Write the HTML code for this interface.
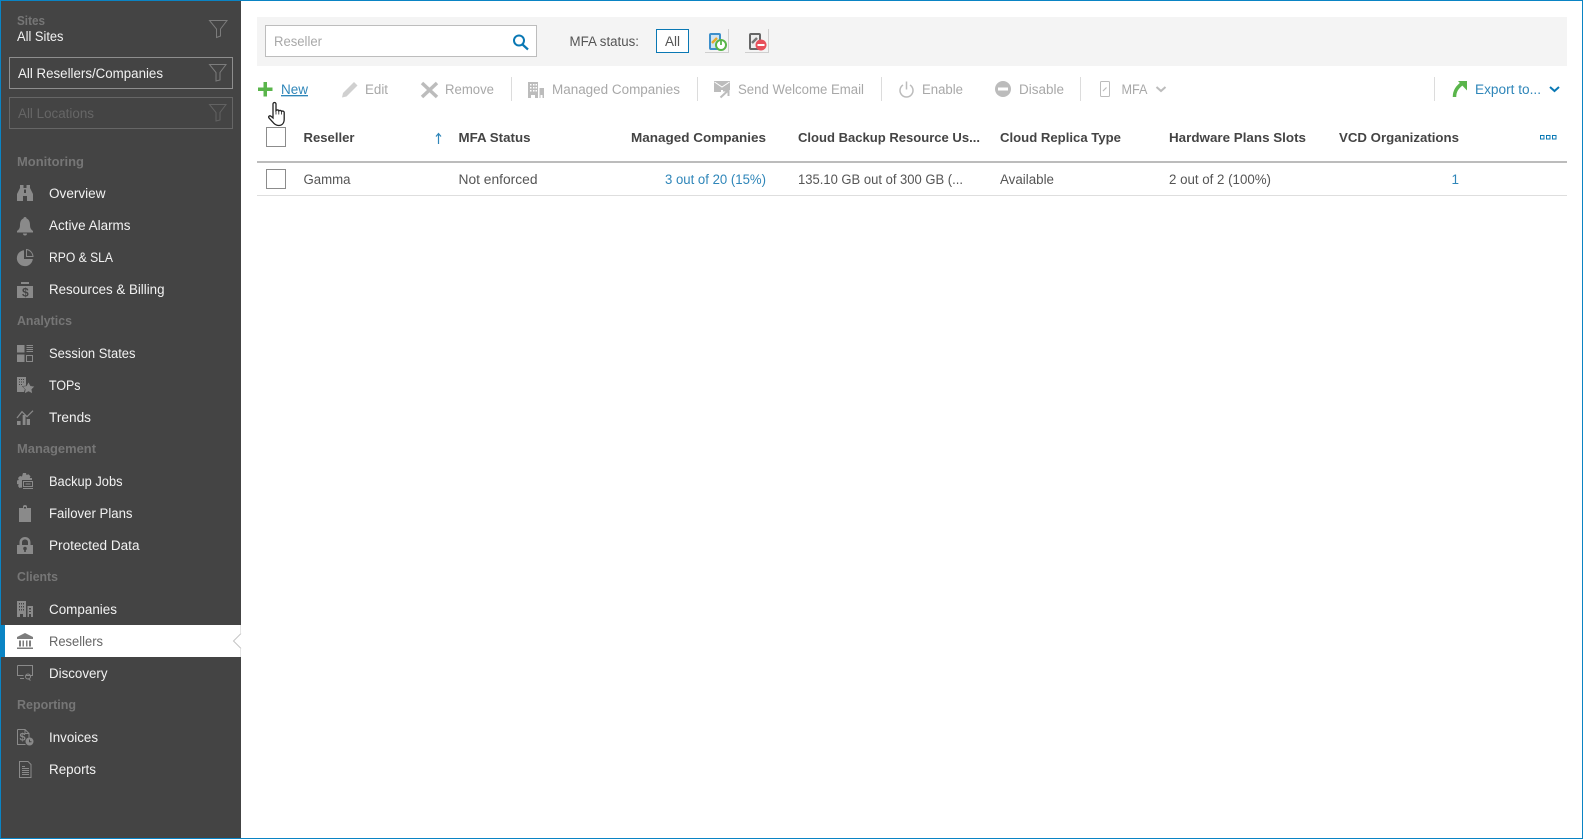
<!DOCTYPE html>
<html><head><meta charset="utf-8"><title>Resellers</title>
<style>
html,body{margin:0;padding:0;background:#fff;width:1583px;height:839px;overflow:hidden}
svg{display:block}
text{font-family:"Liberation Sans",sans-serif;font-size:13.5px;fill:#555}
.n{fill:#f2f2f2}
.h{fill:#767676;font-weight:bold;font-size:12.5px}
.d{fill:#a8a8a8}
.b{fill:#2f86b9}
.t{fill:#444;font-weight:bold;font-size:13px}
.i{fill:#8a8a8a}
.o{fill:none;stroke:#8a8a8a}
.g{fill:#bcbcbc}
.s{stroke:#dcdcdc;stroke-width:1}
</style></head><body>
<svg width="1583" height="839" viewBox="0 0 1583 839" xmlns="http://www.w3.org/2000/svg">
<rect x="0.500" y="0.500" width="1582" height="838" fill="#fff" stroke="#0a84c4"/>
<rect x="1" y="1" width="240" height="837" fill="#444"/>

<!-- sidebar top -->
<text class="h" x="17" y="25" textLength="28" lengthAdjust="spacingAndGlyphs">Sites</text>
<text class="n" x="17" y="41" textLength="46.500" lengthAdjust="spacingAndGlyphs">All Sites</text>
<path d="M209.500 20.500H227L220.500 29V36L216.500 37.500V29Z" fill="none" stroke="#7c7c7c"/>
<rect x="9.500" y="57.500" width="223" height="31" fill="none" stroke="#8e8e8e"/>
<text class="n" x="18" y="78" textLength="145" lengthAdjust="spacingAndGlyphs">All Resellers/Companies</text>
<path d="M209.500 64.500H226L220 72.500V80L216 81V72.500Z" fill="none" stroke="#7c7c7c"/>
<rect x="9.500" y="97.500" width="223" height="31" fill="none" stroke="#666"/>
<text x="18" y="118" textLength="76" lengthAdjust="spacingAndGlyphs" style="fill:#666">All Locations</text>
<path d="M209.500 104.500H226L220 112.500V120L216 121V112.500Z" fill="none" stroke="#626262"/>

<!-- sidebar labels -->
<text class="h" x="17" y="166" textLength="67" lengthAdjust="spacingAndGlyphs">Monitoring</text>
<text class="h" x="17" y="325" textLength="55" lengthAdjust="spacingAndGlyphs">Analytics</text>
<text class="h" x="17" y="453" textLength="79" lengthAdjust="spacingAndGlyphs">Management</text>
<text class="h" x="17" y="581" textLength="41" lengthAdjust="spacingAndGlyphs">Clients</text>
<text class="h" x="17" y="709" textLength="59" lengthAdjust="spacingAndGlyphs">Reporting</text>

<!-- sidebar items -->
<text class="n" x="49" y="198" textLength="56.500" lengthAdjust="spacingAndGlyphs">Overview</text>
<text class="n" x="49" y="230" textLength="81.500" lengthAdjust="spacingAndGlyphs">Active Alarms</text>
<text class="n" x="49" y="262" textLength="64" lengthAdjust="spacingAndGlyphs">RPO &amp; SLA</text>
<text class="n" x="49" y="294" textLength="115.500" lengthAdjust="spacingAndGlyphs">Resources &amp; Billing</text>
<text class="n" x="49" y="358" textLength="86.500" lengthAdjust="spacingAndGlyphs">Session States</text>
<text class="n" x="49" y="390" textLength="31.500" lengthAdjust="spacingAndGlyphs">TOPs</text>
<text class="n" x="49" y="422" textLength="42" lengthAdjust="spacingAndGlyphs">Trends</text>
<text class="n" x="49" y="486" textLength="73.500" lengthAdjust="spacingAndGlyphs">Backup Jobs</text>
<text class="n" x="49" y="518" textLength="83.500" lengthAdjust="spacingAndGlyphs">Failover Plans</text>
<text class="n" x="49" y="550" textLength="90.500" lengthAdjust="spacingAndGlyphs">Protected Data</text>
<text class="n" x="49" y="614" textLength="68" lengthAdjust="spacingAndGlyphs">Companies</text>
<rect x="0" y="625" width="241" height="32" fill="#fff"/>
<rect x="0" y="625" width="5" height="32" fill="#0a84c4"/>
<path d="M241 633.500L233.500 641L241 648.500" fill="#fff" stroke="#c4c4c4"/>
<path d="M240.500 625V633M240.500 649V657" stroke="#e4e4e4"/>
<text x="49" y="646" textLength="54" lengthAdjust="spacingAndGlyphs" style="fill:#666">Resellers</text>
<text class="n" x="49" y="678" textLength="58.500" lengthAdjust="spacingAndGlyphs">Discovery</text>
<text class="n" x="49" y="742" textLength="49" lengthAdjust="spacingAndGlyphs">Invoices</text>
<text class="n" x="49" y="774" textLength="47" lengthAdjust="spacingAndGlyphs">Reports</text>

<!-- sidebar icons -->
<g transform="translate(17,185)"><path class="i" d="M3 0h3.500v3h3V0H13v3l3 6v7h-6v-5H6v5H0V9l3-6z"/><path d="M7 4.500h2V8H7z" fill="#444"/></g>
<g transform="translate(17,217)"><path class="i" d="M8 0c1 0 1.500.6 1.500 1.400C12 2.400 13 5 13 8c0 3 1 4.500 3 6v1.500H0V14c2-1.500 3-3 3-6 0-3 1-5.600 3.500-6.600C6.500.6 7 0 8 0zM6 16.500h4a2 2 0 0 1-4 0z"/></g>
<g transform="translate(17,249)"><path class="i" d="M7 1.200V10h8.800A8 8 0 1 1 7 1.200z"/><path class="o" d="M9.500.5V7.500H16A7.500 7.500 0 0 0 9.500.5z"/></g>
<g transform="translate(17,281)"><rect class="i" x="0" y="5" width="16" height="12"/><rect class="i" x="4" y="1" width="8" height="2"/><text x="5" y="15.500" style="font-size:12px;font-weight:bold;fill:#444">$</text></g>
<g transform="translate(17,345)"><rect class="i" width="7.500" height="7.500"/><rect class="i" y="9.500" width="7.500" height="7.500"/><path class="o" d="M9.500 .5h6.500M9.500 2.500h6.500M9.500 4.500h6.500M9.500 6.500h6.500"/><rect class="o" x="9.500" y="10.500" width="6" height="6"/></g>
<g transform="translate(17,377)"><path class="i" d="M0 0h9v9l-2 6H0z"/><path d="M2 2h1v1H2zM4 2h1v1H4zM6 2h1v1H6zM2 4.500h1v1H2zM4 4.500h1v1H4zM6 4.500h1v1H6zM2 7h1v1H2zM4 7h1v1H4z" fill="#444"/><path d="M11.500 5l2 3.800 4.200.6-3 2.900.7 4.200-3.900-2-3.900 2 .7-4.200-3-2.900 4.200-.6z" class="i" stroke="#444" stroke-width=".5"/></g>
<g transform="translate(17,409)"><rect class="i" x="0" y="12" width="3.600" height="4"/><rect class="i" x="5.700" y="6" width="2.800" height="10"/><rect class="i" x="9.700" y="10" width="3.300" height="6"/><path class="o" stroke-width="1.200" d="M0 9l5-6.300 5 5 6-6"/></g>
<g transform="translate(17,473)"><path class="i" d="M6 0h3l.5 2 2-.8 2 2-.8 1.800H15v3H10v5H6.500L6 15l-2-.5-1.500.5-1.500-2 .8-1.500L0 11V7.500l1.800-.5L1 5l2-2 2 .5z"/><rect x="5" y="7" width="11" height="9" fill="#444"/><rect class="o" x="6.500" y="8.500" width="9" height="5"/><path class="o" d="M8.500 11h5M6 15.500h10"/></g>
<g transform="translate(19,505)"><path class="i" d="M0 3h4V1.500C4 .5 5 0 6 0s2 .5 2 1.500V3h4v14H0z"/><path d="M5 2h2v1.500H5z" fill="#444"/></g>
<g transform="translate(17,537)"><path class="i" d="M0 8h2.500V5.500C2.500 2 5 0 8 0s5.500 2 5.500 5.500V8H16v9H0zM5 8h6V5.500C11 3.500 9.800 2.500 8 2.500S5 3.500 5 5.500z"/><circle cx="8" cy="11.500" r="1.800" fill="#444"/><rect x="7.200" y="12" width="1.600" height="3" fill="#444"/></g>
<g transform="translate(17,601)"><path class="i" d="M0 0h9v16H6v-3H3v3H0zM10.500 5H16v11h-2v-3h-2v3h-1.500z"/><path d="M2 2h1v1.500H2zM4 2h1v1.500H4zM6 2h1v1.500H6zM2 5h1v1.500H2zM4 5h1v1.500H4zM6 5h1v1.500H6zM2 8h1v1.500H2zM4 8h1v1.500H4zM6 8h1v1.500H6zM12 7h2v1.500h-2zM12 10h2v1h-2z" fill="#444"/></g>
<g transform="translate(17,633)"><path d="M8 0l8 4v2H0V4z" fill="#7d7d7d"/><path d="M2 7.500h2v6H2zM5.500 7.500h1.500v6H5.500zM9 7.500h1.500v6H9zM12 7.500h2v6h-2z" fill="#7d7d7d"/><rect y="14.500" width="16" height="1.500" fill="#7d7d7d"/></g>
<g transform="translate(17,665)"><path class="o" d="M.5.500h15v10H9M.5.500v10h6"/><path class="o" d="M3 13.500h4M11 13.500l2.500 2"/><circle class="o" cx="11" cy="11.500" r="2.500"/></g>
<g transform="translate(17,729)"><path class="o" d="M.5.500H8l4 4v4M.5.500v15h8"/><path class="o" d="M8 .5v4h4"/><text x="2.500" y="11.500" style="font-size:11px;font-weight:bold;fill:#8a8a8a">$</text><circle class="i" cx="12.500" cy="12.500" r="4"/><path d="M12.500 10.500v2.300h2" fill="none" stroke="#444"/></g>
<g transform="translate(19,761)"><path class="o" d="M.5.500H9l3 3v13H.5z"/><path class="o" d="M3 7.500h7M3 9.500h7M3 11.500h7M3 13.500h7M3 5.500h3"/></g>

<!-- filter bar -->
<rect x="257" y="17" width="1310" height="49" fill="#f4f4f4"/>
<rect x="265.500" y="25.500" width="271" height="31" fill="#fff" stroke="#bdbdbd"/>
<text class="d" x="274" y="46" textLength="48" lengthAdjust="spacingAndGlyphs">Reseller</text>
<circle cx="519" cy="40.500" r="5" fill="none" stroke="#0a78b4" stroke-width="2"/>
<path d="M522.500 44.500L528 49.500" stroke="#0a78b4" stroke-width="2.200"/>
<text x="569.500" y="46" textLength="69.500" lengthAdjust="spacingAndGlyphs">MFA status:</text>
<rect x="656.500" y="29.500" width="32" height="23" fill="#fff" stroke="#0a78b4"/>
<text x="665" y="46" textLength="15" lengthAdjust="spacingAndGlyphs">All</text>
<!-- MFA enabled icon -->
<path d="M705 52.500H728.500V29" fill="none" stroke="#cfcfcf"/>
<rect x="710" y="34" width="10" height="15" rx="1" fill="#cfe4f4" stroke="#3c8fcb" stroke-width="2"/>
<path d="M712 43l5-5" stroke="#e8a92e" stroke-width="2.500"/>
<circle cx="721" cy="45" r="5" fill="#fff" stroke="#57b548" stroke-width="2"/>
<path d="M721 41V45" stroke="#57b548" stroke-width="1.800"/>
<!-- MFA disabled icon -->
<path d="M745 52.500H768.500V29" fill="none" stroke="#cfcfcf"/>
<rect x="750" y="34" width="10" height="15" rx="1" fill="#eee" stroke="#666" stroke-width="2"/>
<path d="M752 43l5-5" stroke="#777" stroke-width="2.500"/>
<circle cx="761" cy="45" r="5.500" fill="#e8505b"/>
<rect x="757.500" y="44" width="7" height="2" fill="#fff"/>

<!-- action bar -->
<path d="M263.500 82h3.500v5.500H272.500v3.500H267v5.500h-3.500V91H258v-3.500h5.500z" fill="#5ab54b"/>
<text class="b" x="281" y="94" textLength="27" lengthAdjust="spacingAndGlyphs" text-decoration="underline">New</text>
<path d="M342 97.500l1-4.500 11-11 3.500 3.500-11 11z" fill="#d0d0d0"/>
<text class="d" x="365" y="94" textLength="23" lengthAdjust="spacingAndGlyphs">Edit</text>
<path d="M422 83l15 14M437 83l-15 14" stroke="#bcbcbc" stroke-width="3.500"/>
<text class="d" x="445" y="94" textLength="49" lengthAdjust="spacingAndGlyphs">Remove</text>
<path class="s" d="M511.500 77v24M697.500 77v24M881.500 77v24M1080.500 77v24M1434.500 77v24"/>
<g transform="translate(528,82)"><path class="g" d="M0 0h10v16H7v-3H3v3H0zM11.500 6H16v10h-1.500v-3h-2v3h-1z"/><path d="M2 2h1.500v1.500H2zM5 2h1.500v1.500H5zM7.500 2H9v1.500H7.500zM2 5h1.500v1.500H2zM5 5h1.500v1.500H5zM7.500 5H9v1.500H7.500zM2 8h1.500v1.500H2zM5 8h1.500v1.500H5zM7.500 8H9v1.500H7.500z" fill="#fff"/></g>
<text class="d" x="552" y="94" textLength="128" lengthAdjust="spacingAndGlyphs">Managed Companies</text>
<rect x="714" y="81" width="16" height="11" fill="#bcbcbc"/>
<path d="M714.500 82l7.500 5 7.500-5" fill="none" stroke="#fff"/>
<path d="M721 90h9v8h-9z" fill="#fff"/>
<path d="M720.500 97.500l7-6.500M723 90.500h5.500v5.500" fill="none" stroke="#bcbcbc" stroke-width="2"/>
<text class="d" x="738" y="94" textLength="126" lengthAdjust="spacingAndGlyphs">Send Welcome Email</text>
<path d="M903 85a6.500 6.500 0 1 0 7 0" fill="none" stroke="#bcbcbc" stroke-width="1.500"/>
<path d="M906.500 81.500v8" stroke="#bcbcbc" stroke-width="1.500"/>
<text class="d" x="922" y="94" textLength="41" lengthAdjust="spacingAndGlyphs">Enable</text>
<circle cx="1003" cy="89" r="8" fill="#bcbcbc"/><rect x="998" y="87.500" width="10" height="3" fill="#fff"/>
<text class="d" x="1019" y="94" textLength="45" lengthAdjust="spacingAndGlyphs">Disable</text>
<rect x="1100.500" y="81.500" width="9" height="15" rx="1" fill="none" stroke="#bcbcbc"/>
<path d="M1103 91l3.500-3.500" stroke="#bcbcbc" stroke-width="1.200"/>
<text class="d" x="1121.500" y="94" textLength="26" lengthAdjust="spacingAndGlyphs">MFA</text>
<path d="M1156.500 87l4.500 4 4.500-4" fill="none" stroke="#bcbcbc" stroke-width="2"/>
<path d="M1454.500 97c0-6 2.500-10 9-14.500" fill="none" stroke="#5ab54b" stroke-width="3.500"/>
<path d="M1458 81h9v9.500z" fill="#5ab54b"/>
<text class="b" x="1475" y="94" textLength="66" lengthAdjust="spacingAndGlyphs">Export to...</text>
<path d="M1550 87l4.500 4 4.500-4" fill="none" stroke="#0a78b4" stroke-width="2"/>

<!-- cursor -->
<path d="M273 104a1.500 1.500 0 0 1 3 0v6.500c1-.8 2.600-.8 2.800.3 1-.6 2.500-.5 2.700.5 1-.5 2.500-.3 2.700 1V119c0 4-2 6.500-5.500 6.500-3 0-4.500-1.500-6-3.500l-3.700-4c-1-1.500.5-2.800 2-1.700L273 118z" fill="#fff" stroke="#222" stroke-width="1.300"/>
<path d="M276 110.500v4M278.800 110.800v3.700M281.500 111.300v3.200" stroke="#222" stroke-width=".8"/>

<!-- table -->
<rect x="266.500" y="127.500" width="19" height="19" fill="#fff" stroke="#8c8c8c"/>
<text class="t" x="303.500" y="142" textLength="51" lengthAdjust="spacingAndGlyphs">Reseller</text>
<path d="M438.500 134v10M436 136.500l2.500-3 2.500 3" fill="none" stroke="#2f86b9" stroke-width="1.200"/>
<text class="t" x="458.500" y="142" textLength="72" lengthAdjust="spacingAndGlyphs">MFA Status</text>
<text class="t" x="631" y="142" textLength="135" lengthAdjust="spacingAndGlyphs">Managed Companies</text>
<text class="t" x="798" y="142" textLength="182" lengthAdjust="spacingAndGlyphs">Cloud Backup Resource Us...</text>
<text class="t" x="1000" y="142" textLength="121" lengthAdjust="spacingAndGlyphs">Cloud Replica Type</text>
<text class="t" x="1169" y="142" textLength="137" lengthAdjust="spacingAndGlyphs">Hardware Plans Slots</text>
<text class="t" x="1339" y="142" textLength="120" lengthAdjust="spacingAndGlyphs">VCD Organizations</text>
<path d="M1540.500 135.500h3.500v3.500h-3.500zM1546.500 135.500h3.500v3.500h-3.500zM1552.500 135.500h3.500v3.500h-3.500z" fill="none" stroke="#0a78b4"/>
<rect x="257" y="161" width="1310" height="2" fill="#bcbcbc"/>
<rect x="266.500" y="169.500" width="19" height="19" fill="#fff" stroke="#8c8c8c"/>
<text x="303.500" y="184" textLength="47" lengthAdjust="spacingAndGlyphs">Gamma</text>
<text x="458.500" y="184" textLength="79" lengthAdjust="spacingAndGlyphs">Not enforced</text>
<text class="b" x="665" y="184" textLength="101" lengthAdjust="spacingAndGlyphs">3 out of 20 (15%)</text>
<text x="798" y="184" textLength="165" lengthAdjust="spacingAndGlyphs">135.10 GB out of 300 GB (...</text>
<text x="1000" y="184" textLength="54" lengthAdjust="spacingAndGlyphs">Available</text>
<text x="1169" y="184" textLength="102" lengthAdjust="spacingAndGlyphs">2 out of 2 (100%)</text>
<text class="b" x="1451.500" y="184">1</text>
<rect x="257" y="195" width="1310" height="1" fill="#dedede"/>
</svg>
</body></html>
